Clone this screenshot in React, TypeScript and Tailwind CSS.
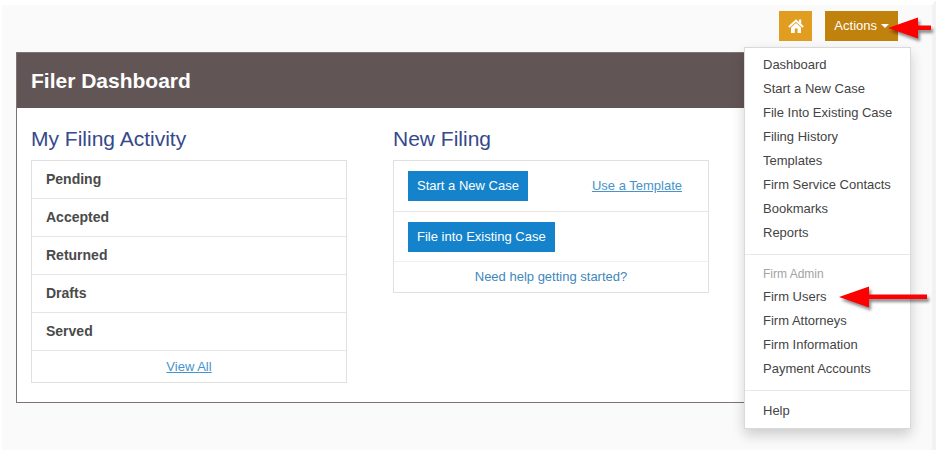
import { useState } from "react";

const activityRows = ["Pending", "Accepted", "Returned", "Drafts", "Served"];

const filingItems = [
  "Dashboard",
  "Start a New Case",
  "File Into Existing Case",
  "Filing History",
  "Templates",
  "Firm Service Contacts",
  "Bookmarks",
  "Reports",
];

const adminItems = [
  "Firm Users",
  "Firm Attorneys",
  "Firm Information",
  "Payment Accounts",
];

function HomeIcon() {
  return (
    <svg width="16" height="14" viewBox="0 0 16 14" fill="none" aria-hidden="true">
      <path d="M11 0.5 H13.2 V5 L11 3 Z" fill="white" />
      <path d="M0.9 8 L8 1.5 L15.1 8" stroke="white" strokeWidth="2" />
      <path d="M3 8.6 L8 4.1 L13 8.6 V14 H9.6 V9.6 H6.8 V14 H3 Z" fill="white" />
    </svg>
  );
}

// Red callout arrow pointing left, tip at the left edge
function Arrow({ length, className }: { length: number; className: string }) {
  return (
    <svg
      width={length + 6}
      height="28"
      viewBox={`0 0 ${length + 6} 28`}
      className={`pointer-events-none absolute ${className}`}
      aria-hidden="true"
    >
      <path
        d={`M0 11 L30 0.5 V8.5 H${length} V13 H30 V21.5 Z`}
        fill="#ff0000"
        style={{ filter: "drop-shadow(2px 3px 1.5px rgba(0,0,0,0.45))" }}
      />
    </svg>
  );
}

function MenuLink({ label, pointed }: { label: string; pointed?: boolean }) {
  return (
    <li className="relative">
      <a
        href="#"
        className="block whitespace-nowrap px-[18px] leading-6 hover:bg-neutral-100"
      >
        {label}
      </a>
      {pointed && <Arrow length={88} className="left-[94px] top-[1px]" />}
    </li>
  );
}

function MenuDivider() {
  return <li role="separator" className="mb-2 mt-[9px] h-px bg-[#e8e8e8]" />;
}

function ActionsMenu() {
  const [isOpen, setIsOpen] = useState(true);

  return (
    <div className="relative">
      <button
        type="button"
        aria-expanded={isOpen}
        onClick={() => setIsOpen((prev) => !prev)}
        className="flex h-[30px] items-center gap-1 bg-[#c0810d] px-[9px] text-white"
      >
        Actions
        <span className="border-x-4 border-t-4 border-x-transparent border-t-white" />
      </button>
      <Arrow length={43} className="left-[63px] top-[6px] z-20" />

      {isOpen && (
        <ul className="absolute right-[-13px] top-full z-10 mt-[6px] w-[167px] border border-[#d9d9d9] bg-white py-[5px] text-[#444] shadow-[0_6px_12px_rgba(0,0,0,0.18)]">
          {filingItems.map((label) => (
            <MenuLink key={label} label={label} />
          ))}
          <MenuDivider />
          <li className="px-[18px] text-xs leading-[22px] text-[#a3a3a3]">
            Firm Admin
          </li>
          {adminItems.map((label) => (
            <MenuLink
              key={label}
              label={label}
              pointed={label === "Firm Users"}
            />
          ))}
          <MenuDivider />
          <MenuLink label="Help" />
        </ul>
      )}
    </div>
  );
}

export default function App() {
  return (
    <div className="min-h-screen border-l-2 border-r-4 border-t-[5px] border-l-white border-r-[#f2f2f2] border-t-white bg-[#fafafa] pl-[14px] pr-[34px] pt-[6px] font-['Liberation_Sans',Arial,sans-serif] text-[13px] leading-5">
      {/* Top buttons */}
      <div className="flex justify-end gap-[13px]">
        <a
          href="#"
          aria-label="Home"
          className="flex h-[30px] w-[33px] items-center justify-center bg-[#e09d20]"
        >
          <HomeIcon />
        </a>
        <ActionsMenu />
      </div>

      {/* Dashboard panel */}
      <main className="mt-[11px] border border-[#7d7373] bg-white">
        <h1 className="bg-[#625555] px-[14px] text-[21px] font-bold leading-[55px] text-white">
          Filer Dashboard
        </h1>

        <div className="flex items-start gap-[46px] pb-[19px] pl-[14px] pr-[188px] pt-[19px]">
          <section className="flex-1">
            <h2 className="text-[21px] leading-6 text-[#35498c]">
              My Filing Activity
            </h2>
            <div className="mt-[9px] border border-[#e0e0e0]">
              <ul>
                {activityRows.map((row) => (
                  <li
                    key={row}
                    className="border-b border-[#e6e6e6] px-[14px] text-sm font-bold leading-[37px] text-[#4a4a4a]"
                  >
                    {row}
                  </li>
                ))}
              </ul>
              <div className="text-center leading-[31px]">
                <a href="#" className="text-[#4793cb] underline">
                  View All
                </a>
              </div>
            </div>
          </section>

          <section className="flex-1">
            <h2 className="text-[21px] leading-6 text-[#35498c]">New Filing</h2>
            <div className="mt-[9px] border border-[#e0e0e0]">
              <div className="flex h-[51px] items-center justify-between border-b border-[#e6e6e6] pl-[14px] pr-[26px]">
                <button
                  type="button"
                  className="h-[30px] bg-[#1483cc] px-[9px] text-white"
                >
                  Start a New Case
                </button>
                <a href="#" className="text-[#4793cb] underline">
                  Use a Template
                </a>
              </div>
              <div className="flex h-[50px] items-center border-b border-[#f0f0f0] px-[14px]">
                <button
                  type="button"
                  className="h-[30px] bg-[#1483cc] px-[9px] text-white"
                >
                  File into Existing Case
                </button>
              </div>
              <div className="text-center leading-[30px]">
                <a href="#" className="text-[#3f87bd]">
                  Need help getting started?
                </a>
              </div>
            </div>
          </section>
        </div>
      </main>
    </div>
  );
}
